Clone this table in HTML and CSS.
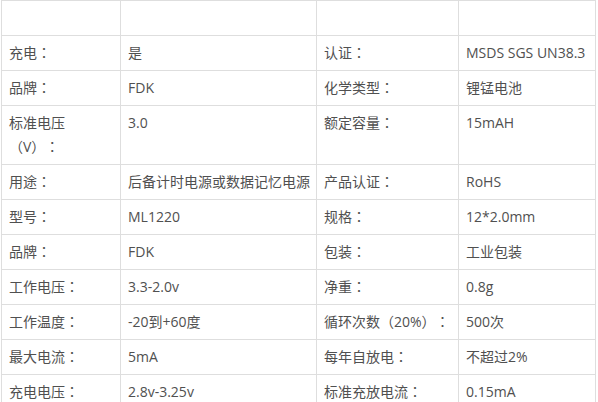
FILE: index.html
```html
<!DOCTYPE html>
<html lang="zh-CN">
<head>
<meta charset="utf-8">
<title>参数</title>
<link rel="stylesheet" href="styles.css">
</head>
<body>
<table class="spec">
  <colgroup>
    <col class="c1"><col class="c2"><col class="c3"><col class="c4">
  </colgroup>
  <tbody>
    <tr class="blank"><td></td><td></td><td></td><td></td></tr>
    <tr><td>充电<span class="pu" lang="zh-TW">：</span></td><td>是</td><td>认证<span class="pu" lang="zh-TW">：</span></td><td>MSDS SGS UN38.3</td></tr>
    <tr><td>品牌<span class="pu" lang="zh-TW">：</span></td><td>FDK</td><td>化学类型<span class="pu" lang="zh-TW">：</span></td><td>锂锰电池</td></tr>
    <tr class="top"><td>标准电压<br><span class="pu" lang="zh-TW">（</span>V<span class="pu" lang="zh-TW">）：</span></td><td>3.0</td><td>额定容量<span class="pu" lang="zh-TW">：</span></td><td>15mAH</td></tr>
    <tr><td>用途<span class="pu" lang="zh-TW">：</span></td><td>后备计时电源或数据记忆电源</td><td>产品认证<span class="pu" lang="zh-TW">：</span></td><td>RoHS</td></tr>
    <tr><td>型号<span class="pu" lang="zh-TW">：</span></td><td>ML1220</td><td>规格<span class="pu" lang="zh-TW">：</span></td><td>12*2.0mm</td></tr>
    <tr><td>品牌<span class="pu" lang="zh-TW">：</span></td><td>FDK</td><td>包装<span class="pu" lang="zh-TW">：</span></td><td>工业包装</td></tr>
    <tr><td>工作电压<span class="pu" lang="zh-TW">：</span></td><td>3.3-2.0v</td><td>净重<span class="pu" lang="zh-TW">：</span></td><td>0.8g</td></tr>
    <tr><td>工作温度<span class="pu" lang="zh-TW">：</span></td><td>-20到+60度</td><td>循环次数<span class="pu" lang="zh-TW">（</span>20%<span class="pu" lang="zh-TW">）：</span></td><td>500次</td></tr>
    <tr><td>最大电流<span class="pu" lang="zh-TW">：</span></td><td>5mA</td><td>每年自放电<span class="pu" lang="zh-TW">：</span></td><td>不超过2%</td></tr>
    <tr><td>充电电压<span class="pu" lang="zh-TW">：</span></td><td>2.8v-3.25v</td><td>标准充放电流<span class="pu" lang="zh-TW">：</span></td><td>0.15mA</td></tr>
  </tbody>
</table>
</body>
</html>
```
FILE: styles.css
```css
html, body {
  margin: 0;
  padding: 0;
  background: #fff;
}

.spec {
  margin-left: 1px;
  border-collapse: collapse;
  table-layout: fixed;
  width: 594px;
  font-family: "Open Sans", "Noto Sans CJK SC", sans-serif;
  font-size: 14px;
  color: #505050;
  text-spacing-trim: space-all;
  font-feature-settings: "chws" 0, "halt" 0;
}

.c1 { width: 119px; }
.c2 { width: 196px; }
.c3 { width: 142px; }
.c4 { width: 137px; }

.spec td {
  border: 1px solid #dedede;
  padding: 5px 6px 5px 7px;
  line-height: 24px;
  height: 24px;
  vertical-align: middle;
  text-align: left;
  white-space: nowrap;
  overflow: hidden;
}

.spec .top td {
  vertical-align: top;
}

.pu {
  font-family: "Noto Sans CJK TC", "Noto Sans CJK SC", sans-serif;
  line-height: 14px;
  text-spacing-trim: space-all;
  font-feature-settings: "chws" 0, "halt" 0;
}
```
